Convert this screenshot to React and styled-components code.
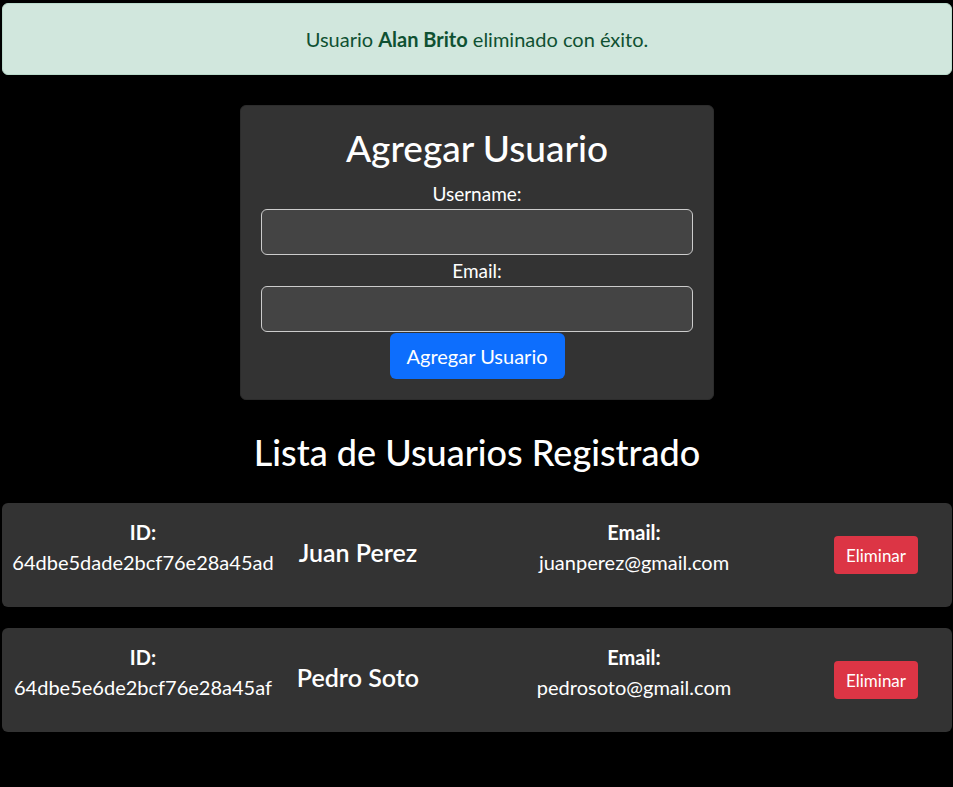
import styled, { createGlobalStyle } from "styled-components";

const GlobalStyle = createGlobalStyle`
  html, body {
    margin: 0;
    padding: 0;
    background: #000;
  }
  body {
    font-family: "Segoe UI", Lato, "Open Sans", sans-serif;
    color: #fff;
  }
`;

const users = [
  { id: "64dbe5dade2bcf76e28a45ad", name: "Juan Perez", email: "juanperez@gmail.com" },
  { id: "64dbe5e6de2bcf76e28a45af", name: "Pedro Soto", email: "pedrosoto@gmail.com" },
];

export default function App() {
  return (
    <Page>
      <GlobalStyle />
      <Alert>
        <span>
          Usuario <strong>Alan Brito</strong> eliminado con éxito.
        </span>
      </Alert>

      <FormCard>
        <FormTitle>Agregar Usuario</FormTitle>
        <Label htmlFor="username">Username:</Label>
        <Input id="username" type="text" />
        <Label htmlFor="email">Email:</Label>
        <Input id="email" type="email" />
        <SubmitButton>Agregar Usuario</SubmitButton>
      </FormCard>

      <ListTitle>Lista de Usuarios Registrado</ListTitle>

      <List>
        {users.map((user) => (
          <UserRow key={user.id}>
            <Field>
              <FieldLabel>ID:</FieldLabel>
              <FieldValue>{user.id}</FieldValue>
            </Field>
            <UserName>{user.name}</UserName>
            <Field>
              <FieldLabel>Email:</FieldLabel>
              <FieldValue>{user.email}</FieldValue>
            </Field>
            <DeleteButton>Eliminar</DeleteButton>
          </UserRow>
        ))}
      </List>
    </Page>
  );
}

const Page = styled.div`
  padding: 3px 1px 40px 2px;
  display: flex;
  flex-direction: column;
  align-items: center;
`;

const Alert = styled.div`
  align-self: stretch;
  box-sizing: border-box;
  height: 72px;
  display: flex;
  align-items: center;
  justify-content: center;
  background: #d1e7dd;
  border: 1px solid #badbcc;
  border-radius: 6px;
  color: #0f5132;
  font-size: 20px;

  strong {
    font-weight: 700;
  }
`;

const FormCard = styled.form`
  box-sizing: border-box;
  width: 474px;
  margin-top: 30px;
  padding: 20px 20px 20px;
  background: #333;
  border: 1px solid #2c2c2c;
  border-radius: 6px;
  display: flex;
  flex-direction: column;
  align-items: center;
`;

const FormTitle = styled.h1`
  margin: 0 0 8px;
  font-size: 37px;
  font-weight: 500;
  line-height: 44px;
`;

const Label = styled.label`
  font-size: 19px;
  line-height: 31px;
`;

const Input = styled.input`
  box-sizing: border-box;
  width: 432px;
  height: 46px;
  background: #444;
  border: 1px solid #ccc;
  border-radius: 6px;
  color: #fff;
  font-size: 18px;
  padding: 0 12px;
`;

const SubmitButton = styled.button`
  width: 175px;
  height: 46px;
  margin-top: 1px;
  border: none;
  border-radius: 6px;
  background: #0d6efd;
  color: #fff;
  font-family: inherit;
  font-size: 20px;
  cursor: pointer;
`;

const ListTitle = styled.h2`
  margin: 30px 0 29px;
  font-size: 36px;
  font-weight: 500;
  line-height: 44px;
`;

const List = styled.div`
  align-self: stretch;
  display: flex;
  flex-direction: column;
  gap: 21px;
`;

const UserRow = styled.div`
  height: 104px;
  box-sizing: border-box;
  background: #333;
  border-radius: 6px;
  display: grid;
  grid-template-columns: 282px 148px 404px 1fr;
  align-items: center;
  justify-items: center;
`;

const Field = styled.div`
  display: flex;
  flex-direction: column;
  align-items: center;
  gap: 4px;
  padding-bottom: 16px;
`;

const FieldLabel = styled.span`
  font-size: 20px;
  font-weight: 700;
  line-height: 26px;
`;

const FieldValue = styled.span`
  font-size: 20px;
  line-height: 26px;
`;

const UserName = styled.span`
  font-size: 25px;
  font-weight: 600;
  margin-bottom: 6px;
`;

const DeleteButton = styled.button`
  justify-self: start;
  margin-left: -2px;
  width: 84px;
  height: 38px;
  border: none;
  border-radius: 4px;
  background: #dc3545;
  color: #fff;
  font-family: inherit;
  font-size: 17px;
  cursor: pointer;
`;
